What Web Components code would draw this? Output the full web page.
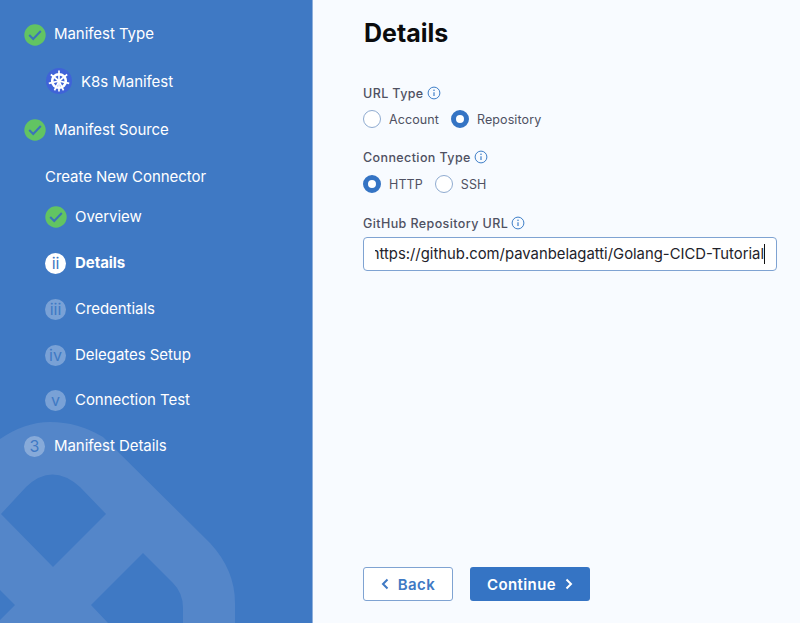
<!DOCTYPE html>
<html>
<head>
<meta charset="utf-8">
<title>Details</title>
<style>
  html, body { margin: 0; height: 100%; }
  body { font-family: Inter, "Liberation Sans", sans-serif; overflow: hidden; }
</style>
</head>
<body>
<wizard-page>
  <step-nav slot="nav">
    <nav-step state="done">Manifest Type</nav-step>
    <nav-step state="k8s" gap="26">K8s Manifest</nav-step>
    <nav-step state="done" gap="26">Manifest Source</nav-step>
    <nav-step state="plain" gap="25">Create New Connector</nav-step>
    <nav-step state="done" sub gap="18">Overview</nav-step>
    <nav-step state="current" sub mark="ii" gap="24">Details</nav-step>
    <nav-step state="todo" sub mark="iii" gap="24">Credentials</nav-step>
    <nav-step state="todo" sub mark="iv" gap="24">Delegates Setup</nav-step>
    <nav-step state="todo" sub mark="v" gap="23">Connection Test</nav-step>
    <nav-step state="todo" mark="3" gap="24">Manifest Details</nav-step>
  </step-nav>
  <details-form slot="main"></details-form>
</wizard-page>

<script>
// shared svg bits
const CHECK = `<svg viewBox="0 0 22 22" width="22" height="22"><circle cx="11" cy="11" r="10.7" fill="#62c462"/><path d="M5.200 11l4 4 7.600-8" fill="none" stroke="#3b73b9" stroke-width="2"/></svg>`;
const K8S = `<svg viewBox="0 0 26 26" width="26" height="26">
  <circle cx="13" cy="13" r="13" fill="#3f63d8"/>
  <g fill="none" stroke="#fff">
    <circle cx="13" cy="13" r="6.800" stroke-width="2.600"/>
    <circle cx="13" cy="13" r="1.500" fill="#fff" stroke="none"/>
    <g stroke-width="1.700">
      <path d="M13 2.500V23.500" />
      <path d="M13 13L21.200 6.500M13 13L4.800 6.500M13 13L23.200 15.300M13 13L2.800 15.300M13 13L17.500 22.400M13 13L8.500 22.400"/>
    </g>
  </g>
</svg>`;
const INFO = `<svg viewBox="0 0 14 14" width="14" height="14"><circle cx="7" cy="7" r="5.900" fill="none" stroke="#3f7fc8" stroke-width="1"/><path d="M7 6.200v3.800" stroke="#3f7fc8" stroke-width="1.200"/><circle cx="7" cy="4.300" r=".8" fill="#3f7fc8"/></svg>`;

class WizardPage extends HTMLElement {
  constructor() {
    super();
    this.attachShadow({ mode: 'open' });
    this.shadowRoot.innerHTML = `
      <style>
        :host { display: grid; grid-template-columns: 313px minmax(0, 1fr); height: 623px; background: #f8fbff; }
        aside { position: relative; overflow: hidden; background: #3f79c4; border-right: 1px solid #8fb0dc; }
        main { min-width: 0; }
        .mark { position: absolute; left: 0; bottom: 0; }
        .nav { position: relative; }
      </style>
      <aside>
        <svg class="mark" width="312" height="210" viewBox="0 413 312 210">
          <path fill="#5486c9" fill-rule="evenodd" d="M0 439Q25 422 50 422Q78 422 103 437L210 543Q235 570 235 603V623H0Z
            M1 514L26 487Q52 462 80 487L106 514L53 567Z
            M143 553L173 583Q183 593 183 608V623H108L91 605Z
            M0 590L15 605L0 620Z"/>
        </svg>
        <div class="nav"><slot name="nav"></slot></div>
      </aside>
      <main><slot name="main"></slot></main>`;
  }
}

class StepNav extends HTMLElement {
  constructor() {
    super();
    this.attachShadow({ mode: 'open' });
    this.shadowRoot.innerHTML = `
      <style>:host { display: flex; flex-direction: column; padding: 23px 0 0 24px; }</style>
      <slot></slot>`;
  }
}

class NavStep extends HTMLElement {
  constructor() {
    super();
    this.attachShadow({ mode: 'open' });
  }
  connectedCallback() {
    const state = this.getAttribute('state');
    const mark = this.getAttribute('mark') || '';
    const gap = this.getAttribute('gap') || 0;
    let icon = '';
    if (state === 'done') icon = CHECK;
    else if (state === 'k8s') icon = K8S;
    else if (state === 'current' || state === 'todo') icon = `<span class="num">${mark}</span>`;
    this.shadowRoot.innerHTML = `
      <style>
        :host { display: flex; align-items: center; gap: 8px; height: 22px; margin-top: ${gap}px; color: #fff; font-size: 15px; line-height: 22px; letter-spacing: -.05px; }
        :host([sub]) { margin-left: 21px; }
        :host([state="k8s"]) { margin-left: 22px; gap: 9px; }
        :host([state="plain"]) { margin-left: 21px; }
        :host([state="current"]) { font-weight: 700; }
        .num { display: flex; align-items: center; justify-content: center; width: 21px; height: 21px; margin-right: 1px; border-radius: 50%; background: rgba(255,255,255,.3); color: #3f79c4; font-size: 16px; font-weight: 400; }
        :host([state="current"]) .num { background: #fff; }
        svg { display: block; flex: none; }
        .k { display: flex; }
        :host(:first-child) .k { margin-top: 2px; }
        :host([state="k8s"]) .k { margin-top: -2px; }
        :host([state="plain"]) .k { display: none; }
      </style>
      <span class="k">${icon}</span><slot></slot>`;
  }
}

class RadioOption extends HTMLElement {
  constructor() {
    super();
    this.attachShadow({ mode: 'open' });
    this.shadowRoot.innerHTML = `
      <style>
        :host { display: inline-flex; align-items: center; gap: 8px; font-size: 12.500px; color: #4f5162; letter-spacing: .1px; }
        i { width: 18px; height: 18px; box-sizing: border-box; border-radius: 50%; border: 1px solid #8fabd0; background: #fff; }
        :host([checked]) i { border: 5px solid #3574c4; }
      </style>
      <i></i><slot></slot>`;
  }
}

class FieldLabel extends HTMLElement {
  constructor() {
    super();
    this.attachShadow({ mode: 'open' });
    this.shadowRoot.innerHTML = `
      <style>
        :host { display: flex; align-items: center; gap: 3px; height: 16px; font-size: 12.500px; font-weight: 500; color: #4f5162; letter-spacing: .4px; }
        svg { display: block; }
      </style>
      <slot></slot>${INFO}`;
  }
}

class UiButton extends HTMLElement {
  constructor() {
    super();
    this.attachShadow({ mode: 'open' });
    this.shadowRoot.innerHTML = `
      <style>
        :host { display: inline-flex; align-items: center; justify-content: center; box-sizing: border-box; height: 34px; gap: 9px; border-radius: 3px; font-size: 15px; font-weight: 600; letter-spacing: .4px; }
        :host([kind="primary"]) { width: 120px; background: #3574c4; color: #fff; }
        :host([kind="secondary"]) { width: 90px; background: #fff; color: #3f79c4; border: 1px solid #7fa3d2; }
        svg { display: block; }
      </style>
      <slot name="before"></slot><slot></slot><slot name="after"></slot>`;
  }
}

class DetailsForm extends HTMLElement {
  constructor() {
    super();
    this.attachShadow({ mode: 'open' });
    this.shadowRoot.innerHTML = `
      <style>
        :host { display: flex; flex-direction: column; height: 623px; box-sizing: border-box; padding: 18px 23px 22px 50px; }
        h1 { margin: 0 0 37px 1px; font-size: 25px; line-height: 30px; font-weight: 700; color: #0b0b0d; }
        .radios { display: flex; gap: 12px; margin: 9px 0 21px; height: 18px; }
        .radios.second { margin: 10px 0 22px; }
        .input { display: flex; box-sizing: border-box; height: 34px; margin-top: 6px; padding: 0 11px; background: #fff; border: 1px solid #7fa3d2; border-radius: 4px; font-size: 14.850px; color: #22222a; white-space: nowrap; }
        .clip { flex: 1; min-width: 0; display: flex; align-items: center; justify-content: flex-end; overflow: hidden; }
        .clip span { flex: none; border-right: 1px solid #111; line-height: 20px; }
        .actions { display: flex; gap: 17px; margin-top: auto; }
      </style>
      <h1>Details</h1>
      <field-label>URL Type</field-label>
      <div class="radios"><radio-option>Account</radio-option><radio-option checked>Repository</radio-option></div>
      <field-label>Connection Type</field-label>
      <div class="radios second"><radio-option checked>HTTP</radio-option><radio-option>SSH</radio-option></div>
      <field-label>GitHub Repository URL</field-label>
      <div class="input"><div class="clip"><span>https://github.com/pavanbelagatti/Golang-CICD-Tutorial</span></div></div>
      <div class="actions">
        <ui-button kind="secondary"><svg slot="before" width="8" height="12" viewBox="0 0 8 12"><path d="M6.500 1.500L2 6l4.500 4.500" fill="none" stroke="#3f79c4" stroke-width="2"/></svg>Back</ui-button>
        <ui-button kind="primary">Continue<svg slot="after" width="8" height="12" viewBox="0 0 8 12"><path d="M1.500 1.500L6 6l-4.500 4.500" fill="none" stroke="#fff" stroke-width="2"/></svg></ui-button>
      </div>`;
  }
}

customElements.define('wizard-page', WizardPage);
customElements.define('step-nav', StepNav);
customElements.define('nav-step', NavStep);
customElements.define('radio-option', RadioOption);
customElements.define('field-label', FieldLabel);
customElements.define('ui-button', UiButton);
customElements.define('details-form', DetailsForm);
</script>
</body>
</html>
